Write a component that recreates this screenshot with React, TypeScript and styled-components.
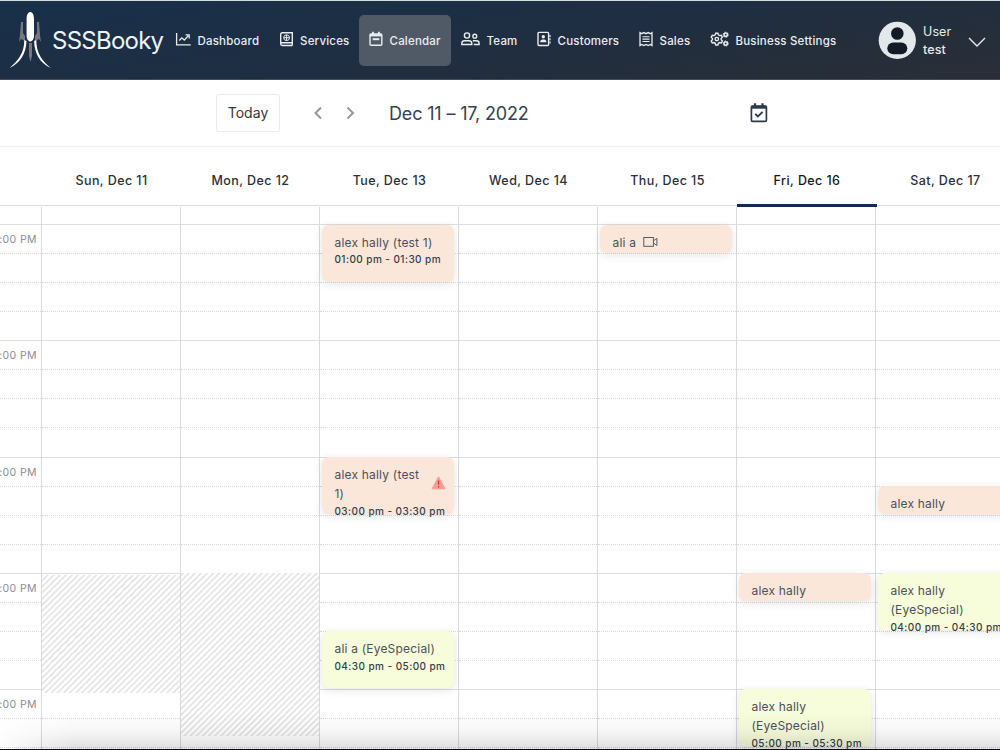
import React from "react";
import styled, { createGlobalStyle } from "styled-components";

const SLOT = 29.075;

const GlobalStyle = createGlobalStyle`
  * { box-sizing: border-box; }
  body { margin: 0; background: #fff; overflow: hidden; font-family: Inter, "Liberation Sans", sans-serif; }
`;

const Page = styled.div`
  position: relative;
  width: 1000px;
  height: 750px;
  overflow: hidden;
  display: flex;
  flex-direction: column;
  background: #fff;
`;

const Navbar = styled.header`
  flex: none;
  display: flex;
  align-items: center;
  height: 80px;
  border-top: 1px solid #d5dddd;
  border-bottom: 1px solid #3e4c5c;
  background: linear-gradient(172deg, #18304a 0%, #1f2e42 50%, #252e3a 78%, #2b2e37 100%);
`;

const Brand = styled.div`
  flex: none;
  display: flex;
  align-items: center;
  width: 165px;
  padding-left: 8px;
  color: #eef2f4;
  font-size: 24px;
  letter-spacing: -0.75px;
  white-space: nowrap;
  svg { flex: none; }
`;

const Nav = styled.nav`
  flex: none;
  display: flex;
  width: 704px;
`;

const NavItem = styled.a<{ $width: number; $active?: boolean }>`
  flex: none;
  display: flex;
  align-items: center;
  gap: 6.5px;
  width: ${(p) => p.$width}px;
  height: 51px;
  padding: 2px 0 0 10px;
  border-radius: 5px;
  background: ${(p) => (p.$active ? "#505a67" : "transparent")};
  color: #e9edf0;
  font-size: 11.5px;
  font-weight: 500;
  letter-spacing: 0.2px;
  white-space: nowrap;
  svg { flex: none; margin-top: -4px; }
`;

const Account = styled.div`
  flex: none;
  display: flex;
  align-items: center;
  margin-left: 9px;
  color: #e6eaed;
`;

const AccountName = styled.div`
  width: 46px;
  margin: 2px 0 0 7px;
  font-size: 12.5px;
  line-height: 18px;
  letter-spacing: 0.1px;
`;

const Surname = styled.div`
  font-weight: 500;
`;

const AccountChevron = styled.svg`
  margin: 3px 0 0 -1px;
`;

const Toolbar = styled.div`
  flex: none;
  display: flex;
  align-items: center;
  height: 67px;
  padding-left: 216px;
  border-bottom: 1px solid #f3f3f4;
`;

const TodayButton = styled.button`
  width: 64px;
  height: 38px;
  padding: 0 0 1px;
  border: 1px solid #ebebed;
  border-radius: 3px;
  background: #fff;
  color: #33383e;
  font: 400 14px Inter, sans-serif;
  letter-spacing: 0.05px;
`;

const Arrows = styled.div`
  display: flex;
  gap: 23px;
  margin-left: 34px;
`;

const RangeTitle = styled.h2`
  width: 361px;
  margin: 0 0 0 34px;
  color: #35424f;
  font-size: 18px;
  font-weight: 400;
  letter-spacing: -0.16px;
  white-space: nowrap;
`;

const HeaderRow = styled.div`
  flex: none;
  display: flex;
  width: 1016px;
  height: 59px;
  padding-left: 42px;
  border-bottom: 1px solid #dcdcdc;
`;

const DayHeader = styled.div<{ $today?: boolean }>`
  flex: none;
  display: flex;
  align-items: center;
  justify-content: center;
  width: ${(p) => (p.$today ? 140 : 139)}px;
  height: 60px;
  margin-right: ${(p) => (p.$today ? -1 : 0)}px;
  padding-bottom: ${(p) => (p.$today ? 1 : 4)}px;
  padding-top: 10px;
  border-bottom: ${(p) => (p.$today ? "3px solid #102c54" : "0")};
  color: ${(p) => (p.$today ? "#15181c" : "#2c3036")};
  font-size: 12.5px;
  font-weight: 500;
  letter-spacing: 0.42px;
`;

const Grid = styled.div`
  flex: 1;
  display: flex;
  width: 1016px;
  min-height: 0;
  padding-top: 1px;
`;

const Column = styled.div<{ $axis?: boolean }>`
  position: relative;
  flex: none;
  width: ${(p) => (p.$axis ? 42 : 139)}px;
  border-right: 1px solid #dadadc;
`;

const Lead = styled.div`
  height: 17px;
`;

const Slot = styled.div<{ $hour?: boolean }>`
  height: ${SLOT}px;
  padding-right: 4px;
  border-top: 1px ${(p) => (p.$hour ? "solid #dedede" : "dotted #d9d9d9")};
  color: #858d98;
  font-size: 10.5px;
  line-height: 29px;
  letter-spacing: 0.4px;
  direction: rtl;
  white-space: nowrap;
  span { unicode-bidi: embed; direction: ltr; }
`;

const Blocked = styled.div<{ $top: number; $height: number }>`
  position: absolute;
  left: 0;
  right: 0;
  top: ${(p) => p.$top}px;
  height: ${(p) => p.$height}px;
  background: repeating-linear-gradient(-45deg, #e6e6e6 0 1.3px, #fff 1.9px 3.7px, #e6e6e6 4.3px);
`;

const Event = styled.div<{ $top: number; $height: number; $tone: "peach" | "lime" }>`
  position: absolute;
  left: 2.4px;
  top: ${(p) => p.$top}px;
  width: 132px;
  height: ${(p) => p.$height}px;
  padding: 8px 0 0 12.1px;
  border-radius: 7px;
  background: ${(p) => (p.$tone === "peach" ? "#fbe7da" : "#f7fcdb")};
  box-shadow: 0 2px 9px rgba(50, 50, 60, 0.13);
  color: #4b5158;
  white-space: nowrap;
`;

const EventTitle = styled.div`
  display: flex;
  align-items: center;
  gap: 7px;
  font-size: 12px;
  line-height: 19px;
  letter-spacing: 0.2px;
  white-space: pre;
`;

const EventTime = styled.div`
  margin-top: -0.5px;
  color: #363e4a;
  font-size: 10px;
  font-weight: 500;
  line-height: 16px;
  letter-spacing: 0.43px;
`;

const AlertBadge = styled.div`
  position: absolute;
  right: 8px;
  top: 19px;
  line-height: 0;
`;

const BottomShade = styled.div`
  position: absolute;
  left: 0;
  right: 0;
  bottom: 0;
  height: 38px;
  background: linear-gradient(to bottom, rgba(0,0,0,0) 0%, rgba(0,0,0,0.035) 50%, rgba(0,0,0,0.13) 100%);
  mask-image: linear-gradient(to right, rgba(0,0,0,0.1) 0, #000 75px);
`;

const BottomEdge = styled.div`
  position: absolute;
  left: 0;
  right: 0;
  bottom: 0;
  height: 1px;
  background: #080a14;
`;

const Rocket = () => (
  <svg width="44" height="60" viewBox="0 0 44 60">
    <path d="M13 12h2v11l2 3v5l-4-2-2 3 1-7z" fill="#77777c" />
    <path d="M31 12h-2v11l-2 3v5l4-2 2 3-1-7z" fill="#77777c" />
    <path d="M21 33h3v13l-1.5 6L21 46z" fill="#77777c" />
    <path d="M22.3 2c2.3 0 3.7 3 3.7 7v17c0 3-2 5.500-3.700 5.500S18.600 29 18.600 26V9c0-4 1.400-7 3.700-7z" fill="#fff" />
    <path d="M16.300 30C16.300 43 10 51 1.500 58 12 53 18 44 18.500 31z" fill="#fff" />
    <path d="M28.300 30C28.300 43 34 51 42.800 58 32 53 26.600 44 26.100 31z" fill="#fff" />
  </svg>
);

const Icon = ({ w, h = 16, sw = 1.4, children }: { w: number; h?: number; sw?: number; children: React.ReactNode }) => (
  <svg width={w} height={h} viewBox={`0 0 ${w} ${h}`} fill="none" stroke="currentColor" strokeWidth={sw}>
    {children}
  </svg>
);

const ChartIcon = () => (
  <Icon w={16} sw={1.3}>
    <path d="M1.600 2v11.800h14.100" />
    <path d="M4.300 9.500L6.800 6.800 9.300 9.100 13.500 4.500" />
    <path d="M10.600 3.800h3.600v3.600" />
  </Icon>
);
const BookIcon = () => (
  <Icon w={14}>
    <path d="M12.300 12V1.700H2.300C1.200 1.700 .7 2.400 .7 3.500v9.300c0 1 .5 1.700 1.600 1.700h10M.9 11.800h11.400v2.700" />
    <circle cx="6.600" cy="6.700" r="2.900" strokeWidth="1" />
    <path d="M3.700 6.700h5.800M6.600 3.800v5.800" strokeWidth="1" />
  </Icon>
);
const CalendarIcon = () => (
  <Icon w={14}>
    <rect x="1" y="3" width="11.800" height="11.300" rx="1" />
    <path d="M1 4.200h11.800" strokeWidth="2.400" />
    <path d="M4 .8v3M9.900 .8v3" strokeWidth="1.800" />
    <path d="M3.700 8.200h6.600" strokeWidth="2" />
  </Icon>
);
const TeamIcon = () => (
  <Icon w={19}>
    <circle cx="6" cy="4.500" r="2.600" />
    <circle cx="13.800" cy="5.200" r="1.900" />
    <path d="M.8 13.500v-1c0-1.600 1.200-2.800 2.700-2.800h4.600c1.500 0 2.700 1.200 2.700 2.800v1z" />
    <path d="M11.800 9.700h3.600c1.500 0 2.700 1 2.700 2.500v1.300h-5.300" />
  </Icon>
);
const ContactIcon = () => (
  <Icon w={14}>
    <rect x="1" y="1.400" width="10.600" height="13.100" rx="1" />
    <path d="M13 4v2M13 7.200v2M13 10.400v2" strokeWidth="1.200" />
    <circle cx="6.300" cy="5.800" r="1.700" fill="currentColor" stroke="none" />
    <path d="M3.300 11.300v-.7c0-1.400 1.400-2 3-2s3 .6 3 2v.7z" fill="currentColor" stroke="none" />
  </Icon>
);
const ReceiptIcon = () => (
  <Icon w={14}>
    <path d="M1 1.600l1.700 1.100 2.100-1.100 2.200 1.100 2.200-1.100 2.100 1.100L13 1.600v13l-1.700-1.100-2.100 1.100L7 13.500l-2.200 1.100-2.100-1.100L1 14.600z" strokeWidth="1.300" />
    <path d="M3.500 5.700h7M3.500 8.100h7M3.500 10.500h7" strokeWidth="1.100" />
  </Icon>
);
const GearsIcon = () => (
  <Icon w={19}>
    <path d="M5.700 2.200h2.200l.5 1.700 1.200.7 1.700-.4 1.100 1.900-1.200 1.300v1.400l1.200 1.300-1.100 1.900-1.700-.4-1.200.7-.5 1.700H5.700l-.5-1.700-1.200-.7-1.700.4-1.100-1.900 1.200-1.300V7.400L1.200 6.100l1.100-1.900 1.700.4 1.200-.7z" strokeWidth="1.400" />
    <circle cx="6.800" cy="8.100" r="1.700" />
    <circle cx="15.700" cy="3.700" r="1.700" strokeWidth="1.600" />
    <circle cx="15.700" cy="12.500" r="1.700" strokeWidth="1.600" />
    <circle cx="15.700" cy="3.700" r="2.600" strokeWidth="1" strokeDasharray="1.100 1.620" />
    <circle cx="15.700" cy="12.500" r="2.600" strokeWidth="1" strokeDasharray="1.100 1.620" />
  </Icon>
);
const Avatar = () => (
  <svg width="38" height="38" viewBox="0 0 38 38">
    <circle cx="19.300" cy="19.300" r="18.600" fill="#e3e8eb" />
    <circle cx="19.300" cy="12.500" r="6.300" fill="#141b26" />
    <rect x="9.300" y="21.400" width="20" height="11.800" rx="5.900" fill="#141b26" />
  </svg>
);
const Chevron = ({ left }: { left?: boolean }) => (
  <svg width="9" height="14" viewBox="0 0 9 14" fill="none" stroke="#979797" strokeWidth="2">
    <path d={left ? "M7 1.500L1.500 7l5.500 5.500" : "M1.500 1.500L7 7l-5.500 5.500"} />
  </svg>
);
const CheckCalendar = () => (
  <svg width="18" height="20" viewBox="0 0 18 20" fill="none" stroke="#2c3b4b" strokeWidth="1.700">
    <rect x="1.400" y="3" width="15" height="15.400" rx="1.200" />
    <path d="M1.400 4.200h15" strokeWidth="3" />
    <path d="M5 .3v4M12.500 .3v4" strokeWidth="2.200" />
    <path d="M5.200 10.800l2.700 2.700 4.700-4.700" strokeWidth="1.900" />
  </svg>
);
const VideoIcon = () => (
  <svg width="16" height="12" viewBox="0 0 16 12" fill="none" stroke="#565a5f" strokeWidth="1">
    <rect x=".8" y="1.500" width="9.600" height="8.800" />
    <path d="M10.600 4.700l3.300-2.400v7.200l-3.300-2.400" />
  </svg>
);
const AlertIcon = () => (
  <svg width="15" height="14" viewBox="0 0 15 14">
    <path d="M7.500.8L14 12.800H1z" fill="#f99c93" stroke="#f99c93" strokeLinejoin="round" />
    <path d="M7.500 4.500v4.300M7.500 10v1.500" stroke="#e2362f" strokeWidth="1.300" />
  </svg>
);

const navItems = [
  { label: "Dashboard", width: 104.5, icon: <ChartIcon /> },
  { label: "Services", width: 89.5, icon: <BookIcon /> },
  { label: "Calendar", width: 92, icon: <CalendarIcon />, active: true },
  { label: "Team", width: 76, icon: <TeamIcon /> },
  { label: "Customers", width: 102, icon: <ContactIcon /> },
  { label: "Sales", width: 71, icon: <ReceiptIcon /> },
  { label: "Business Settings", width: 147, icon: <GearsIcon /> },
];

type Booking = { top: number; height: number; tone: "peach" | "lime"; title: string; time?: string; video?: boolean; alert?: boolean };
type Day = { label: string; today?: boolean; blocked?: { top: number; height: number }; bookings?: Booking[] };

const days: Day[] = [
  { label: "Sun, Dec 11", blocked: { top: 368, height: 118 } },
  { label: "Mon, Dec 12", blocked: { top: 366, height: 163 } },
  {
    label: "Tue, Dec 13",
    bookings: [
      { top: 17.6, height: 57, tone: "peach", title: "alex hally (test 1)", time: "01:00 pm - 01:30 pm" },
      { top: 250, height: 57, tone: "peach", title: "alex hally (test\n1)", time: "03:00 pm - 03:30 pm", alert: true },
      { top: 424.4, height: 57, tone: "lime", title: "ali a (EyeSpecial)", time: "04:30 pm - 05:00 pm" },
    ],
  },
  { label: "Wed, Dec 14" },
  { label: "Thu, Dec 15", bookings: [{ top: 17.6, height: 28, tone: "peach", title: "ali a", video: true }] },
  {
    label: "Fri, Dec 16",
    today: true,
    bookings: [
      { top: 366, height: 28, tone: "peach", title: "alex hally" },
      { top: 482.4, height: 57, tone: "lime", title: "alex hally\n(EyeSpecial)", time: "05:00 pm - 05:30 pm" },
    ],
  },
  {
    label: "Sat, Dec 17",
    bookings: [
      { top: 279, height: 28, tone: "peach", title: "alex hally" },
      { top: 366, height: 57, tone: "lime", title: "alex hally\n(EyeSpecial)", time: "04:00 pm - 04:30 pm" },
    ],
  },
];

const slots = Array.from({ length: 19 }, (_, i) => i);

export default function App() {
  return (
    <Page>
      <GlobalStyle />
      <Navbar>
        <Brand><Rocket />SSSBooky</Brand>
        <Nav>
          {navItems.map((n) => (
            <NavItem key={n.label} $width={n.width} $active={n.active}>
              {n.icon}
              {n.label}
            </NavItem>
          ))}
        </Nav>
        <Account>
          <Avatar />
          <AccountName>User<Surname>test</Surname></AccountName>
          <AccountChevron width="18" height="12" viewBox="0 0 18 12" fill="none" stroke="#e6eaed" strokeWidth="1.400">
            <path d="M1 2l8 8 8-8" />
          </AccountChevron>
        </Account>
      </Navbar>
      <Toolbar>
        <TodayButton>Today</TodayButton>
        <Arrows><Chevron left /><Chevron /></Arrows>
        <RangeTitle>Dec 11 – 17, 2022</RangeTitle>
        <CheckCalendar />
      </Toolbar>
      <HeaderRow>
        {days.map((d) => <DayHeader key={d.label} $today={d.today}>{d.label}</DayHeader>)}
      </HeaderRow>
      <Grid>
        <Column $axis>
          <Lead />
          {slots.map((i) => (
            <Slot key={i} $hour={i % 4 === 0}>{i % 4 === 0 && <span>{i / 4 + 1}:00 PM</span>}</Slot>
          ))}
        </Column>
        {days.map((d) => (
          <Column key={d.label}>
            <Lead />
            {slots.map((i) => <Slot key={i} $hour={i % 4 === 0} />)}
            {d.blocked && <Blocked $top={d.blocked.top} $height={d.blocked.height} />}
            {d.bookings?.map((b) => (
              <Event key={b.top} $top={b.top} $height={b.height} $tone={b.tone}>
                <EventTitle>{b.title}{b.video && <VideoIcon />}</EventTitle>
                {b.time && <EventTime>{b.time}</EventTime>}
                {b.alert && <AlertBadge><AlertIcon /></AlertBadge>}
              </Event>
            ))}
          </Column>
        ))}
      </Grid>
      <BottomShade />
      <BottomEdge />
    </Page>
  );
}
